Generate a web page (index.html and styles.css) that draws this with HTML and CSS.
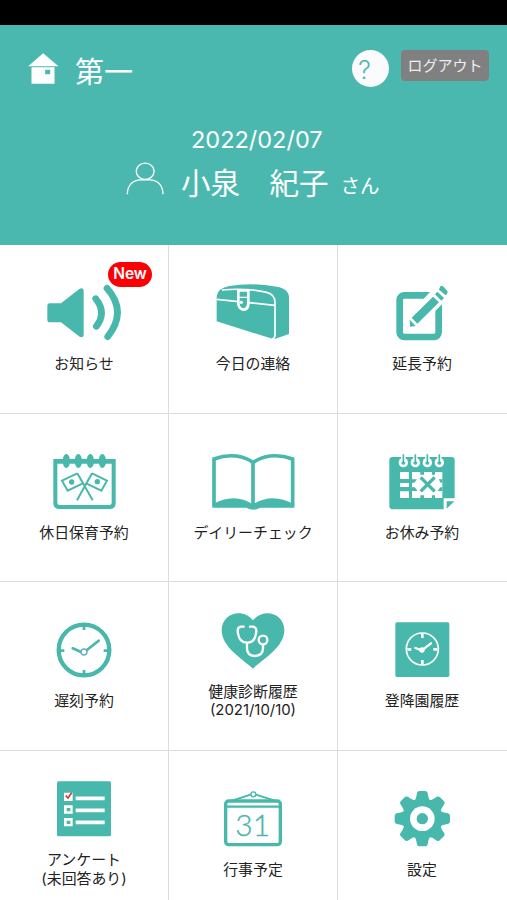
FILE: index.html
```html
<!DOCTYPE html>
<html lang="ja">
<head>
    <meta charset="UTF-8">
    <meta name="viewport" content="width=device-width, initial-scale=1.0">
    <title>メニュー</title>
    <link rel="stylesheet" href="styles.css">
</head>
<body>
    <div class="status-bar"></div>

    <header class="header">
        <div class="top-row">
            <svg class="home-icon" viewBox="86 98 92 93">
                <path fill="#fff" d="M131 99 L177 138 H86 Z"/>
                <path fill="#fff" fill-rule="evenodd" d="M96 141 H165 V190 H96 Z M137 148 V162 H152 V148 Z"/>
            </svg>
            <span class="school">第一</span>
            <button class="help-btn">?</button>
            <button class="logout-btn">ログアウト</button>
        </div>
        <div class="date">2022/02/07</div>
        <div class="user-row">
            <svg class="user-icon" viewBox="379 424 115 98">
                <ellipse cx="437" cy="451" rx="27" ry="24.500"/>
                <path d="M383 521 C383 493 400 477 424 477 H450 C474 477 491 493 491 521"/>
            </svg>
            <span class="user-name">小泉　紀子</span>
            <span class="user-suffix">さん</span>
        </div>
    </header>

    <main class="menu">
        <!-- お知らせ -->
        <a class="item">
            <span class="badge">New</span>
            <svg class="icon" viewBox="118 107 270 180">
                <path class="fill" d="M151 171 H184 L240 127 Q252 122 252 135 V264 Q252 276 240 271 L184 228 H151 Q143 228 143 220 V179 Q143 171 151 171 Z"/>
                <path class="line" stroke-width="20" stroke-linecap="round" d="M288 157 Q322 199 290 240 M322 126 Q384 196 324 271"/>
            </svg>
            <span class="label">お知らせ</span>
        </a>

        <!-- 今日の連絡 -->
        <a class="item">
            <svg class="icon" viewBox="118 107 270 180">
                <path class="fill" d="M144 225 V151 Q147 125 182 119 Q250 108 324 121 Q361 127 361 154 V263 L316 279 Z"/>
                <path class="cut" stroke-width="5" d="M160 131 Q230 124 294 138 Q319 144 319 169 V267 Q319 277 309 278"/>
                <path class="cut" stroke-width="5" d="M144 159 L319 177"/>
                <path class="cut-fill" d="M205 128 H243 V176 Q240 194 224 194 Q208 192 205 174 Z"/>
                <path class="fill" d="M213 136 H235 V151 H213 Z M213 155 H235 V173 Q232 186 224 186 Q215 184 213 173 Z"/>
                <circle class="cut-fill" cx="218" cy="168" r="5"/>
            </svg>
            <span class="label">今日の連絡</span>
        </a>

        <!-- 延長予約 -->
        <a class="item">
            <svg class="icon" viewBox="118 107 270 180">
                <rect class="line" x="186" y="147" width="117" height="125" rx="14" stroke-width="20"/>
                <path class="cut-fill" d="M205 250 L203 216 L280 134 L310 104 L342 137 L313 174 L239 247 Z"/>
                <path class="fill" d="M286 151 L304 168 L239 232 L222 214 Z M216 220 L234 239 L217 241 Z M292 144 L299 136 L319 155 L311 163 Z M304 130 L308 120 Q312 116 316 120 L329 134 Q332 139 324 147 Z"/>
            </svg>
            <span class="label">延長予約</span>
        </a>

        <!-- 休日保育予約 -->
        <a class="item">
            <svg class="icon" viewBox="118 108 270 180">
                <path class="line" stroke-width="12" d="M167 138 H342 V264 Q342 276 329 276 H180 Q167 276 167 264 Z"/>
                <path class="line" stroke-width="14" d="M167 139 H342"/>
                <g class="fill">
                    <ellipse cx="200" cy="138" rx="11" ry="21"/>
                    <ellipse cx="236" cy="138" rx="11" ry="21"/>
                    <ellipse cx="272" cy="138" rx="11" ry="21"/>
                    <ellipse cx="308" cy="138" rx="11" ry="21"/>
                    <circle cx="216" cy="201" r="8"/>
                    <circle cx="293" cy="200" r="8"/>
                </g>
                <path class="line" stroke-width="6" d="M233 175 L187 197 L204 227 L248 206 M233 175 L279 256 M277 175 L322 197 L305 227 L261 206 M277 175 L232 256"/>
            </svg>
            <span class="label">休日保育予約</span>
        </a>

        <!-- デイリーチェック -->
        <a class="item">
            <svg class="icon" viewBox="118 108 270 180">
                <path class="line" stroke-width="11" d="M136 272 V132 Q197 110 247 138 L253 143 L260 138 Q310 110 372 132 V272 M253 143 V272"/>
                <path class="fill" d="M131 278 V268 Q197 231 253 268 Q310 231 377 268 V278 H275 Q253 290 233 278 Z"/>
            </svg>
            <span class="label">デイリーチェック</span>
        </a>

        <!-- お休み予約 -->
        <a class="item">
            <svg class="icon" viewBox="118 108 270 180">
                <path class="fill" d="M165 126 H342 Q351 126 351 135 V250 H318 V283 H165 Q155 283 155 273 V135 Q155 126 165 126 Z M327 259 H350 L327 281 Z"/>
                <g class="cut-fill">
                    <circle cx="197" cy="143" r="14"/>
                    <circle cx="233" cy="143" r="14"/>
                    <circle cx="269" cy="143" r="14"/>
                    <circle cx="305" cy="143" r="14"/>
                    <path d="M187 171 H214 V192 H187 Z M187 204 H214 V216 H187 Z M187 229 H214 V249 H187 Z M223 171 H314 V249 H223 Z"/>
                </g>
                <g class="fill">
                    <circle cx="197" cy="143" r="6"/>
                    <circle cx="233" cy="143" r="6"/>
                    <circle cx="269" cy="143" r="6"/>
                    <circle cx="305" cy="143" r="6"/>
                    <path d="M223 193 H238 L230 203 H223 Z M223 217 H232 L239 228 H223 Z M314 193 H303 L309 203 H314 Z M314 217 H308 L300 228 H314 Z M248 171 H259 V179 H248 Z M283 171 H292 V179 H283 Z M248 241 H259 V249 H248 Z M283 241 H292 V249 H283 Z"/>
                </g>
                <path class="cut" stroke-width="13" d="M197 118 V140 M233 118 V140 M269 118 V140 M305 118 V140"/>
                <path class="line" stroke-width="5" d="M197 118 V141 M233 118 V141 M269 118 V141 M305 118 V141"/>
                <path class="line" stroke-width="10" d="M249 187 L291 229 M291 187 L249 229"/>
            </svg>
            <span class="label">お休み予約</span>
        </a>

        <!-- 遅刻予約 -->
        <a class="item">
            <svg class="icon" viewBox="118 110 270 180">
                <circle class="line" cx="253" cy="203" r="76" stroke-width="13"/>
                <path class="line" stroke-width="8" d="M253 129 V143 M253 263 V277 M179 205 H194 M312 205 H327"/>
                <path class="line" stroke-width="8" stroke-linecap="round" d="M219 198 L251 212 M297 175 L257 207"/>
                <circle cx="253" cy="209" r="9" fill="#fff" stroke="#67abc6" stroke-width="4"/>
            </svg>
            <span class="label">遅刻予約</span>
        </a>

        <!-- 健康診断履歴 -->
        <a class="item">
            <svg class="icon" viewBox="118 82 270 180">
                <path class="fill" d="M253 258 C221 229 159 193 159 143 C159 90 223 74 253 113 C284 74 347 90 347 143 C347 193 284 229 253 258 Z"/>
                <path class="cut" stroke-width="7" stroke-linecap="round" d="M225 132 H216 Q204 135 208 152 Q212 180 235 180 Q259 180 262 152 Q266 135 253 132 H244 M235 180 V197 Q235 219 258 220 Q283 219 283 197 V186"/>
                <circle class="cut" cx="283" cy="172" r="13" stroke-width="7"/>
            </svg>
            <span class="label">健康診断履歴<br>(2021/10/10)</span>
        </a>

        <!-- 登降園履歴 -->
        <a class="item">
            <svg class="icon" viewBox="118 110 270 180">
                <rect class="fill" x="173" y="120" width="162" height="164" rx="5"/>
                <circle class="cut" cx="254" cy="200" r="48" stroke-width="5"/>
                <path class="cut" stroke-width="8" d="M254 154 V167 M254 233 V246 M209 201 H221 M287 201 H299"/>
                <path class="cut" stroke-width="7" stroke-linecap="round" d="M233 197 L252 204 L280 183"/>
                <circle class="cut-fill" cx="253" cy="203" r="8"/>
            </svg>
            <span class="label">登降園履歴</span>
        </a>

        <!-- アンケート -->
        <a class="item">
            <svg class="icon" viewBox="118 84 270 180">
                <rect class="fill" x="172" y="94" width="162" height="165" rx="5"/>
                <path class="cut-fill" d="M193 128 H219 V153 H193 Z M193 166 H219 V191 H193 Z M193 204 H219 V229 H193 Z"/>
                <path class="cut" stroke-width="11" d="M228 145 H315 M228 181 H315 M228 217 H315"/>
                <path class="fill" d="M201 174 H212 V184 H201 Z M201 212 H212 V222 H201 Z"/>
                <path fill="none" stroke="#d43c3c" stroke-width="5" d="M198 137 L205 144 L216 128"/>
            </svg>
            <span class="label">アンケート<br>(未回答あり)</span>
        </a>

        <!-- 行事予定 -->
        <a class="item">
            <svg class="icon" viewBox="118 112 270 180">
                <rect class="line" x="171" y="151" width="164" height="131" rx="9" stroke-width="10"/>
                <path class="line" stroke-width="7" d="M172 168 H334"/>
                <path class="line" stroke-width="6" d="M190 150 L246 132 M318 150 L262 132"/>
                <circle class="line" cx="254" cy="131" r="7.500" stroke-width="4"/>
                <text class="day" x="252" y="257">31</text>
            </svg>
            <span class="label">行事予定</span>
        </a>

        <!-- 設定 -->
        <a class="item">
            <svg class="icon" viewBox="118 112 270 180">
                <defs>
                    <path id="tooth" d="M229 150 Q235 147 237 132 Q238 121 246 121 H262 Q270 121 271 132 Q273 147 279 150 V180 H229 Z"/>
                </defs>
                <g class="fill">
                    <circle cx="254" cy="204" r="59"/>
                    <use href="#tooth"/>
                    <use href="#tooth" transform="rotate(45 254 204)"/>
                    <use href="#tooth" transform="rotate(90 254 204)"/>
                    <use href="#tooth" transform="rotate(135 254 204)"/>
                    <use href="#tooth" transform="rotate(180 254 204)"/>
                    <use href="#tooth" transform="rotate(225 254 204)"/>
                    <use href="#tooth" transform="rotate(270 254 204)"/>
                    <use href="#tooth" transform="rotate(315 254 204)"/>
                </g>
                <circle class="cut-fill" cx="254" cy="204" r="37"/>
                <circle class="fill" cx="254" cy="204" r="17"/>
            </svg>
            <span class="label">設定</span>
        </a>
    </main>
</body>
</html>
```

FILE: styles.css
```css
body {
    font-family: Inter, 'Noto Sans CJK JP', sans-serif;
    background-color: #fff;
    color: #222;
    margin: 0;
    height: 900px;
    overflow: hidden;
}

button {
    border: none;
    padding: 0;
    font-family: inherit;
    cursor: pointer;
}

.status-bar {
    height: 25px;
    background-color: #000;
}

.header {
    box-sizing: border-box;
    height: 220px;
    padding: 24px 18px 0 28px;
    background-color: #4bb8af;
    color: #fff;
}

.top-row {
    display: flex;
    height: 40px;
}

.home-icon {
    width: 31px;
    height: 31px;
    margin-top: 4px;
}

.school {
    margin: 4px auto 0 16px;
    font-size: 29px;
    line-height: 40px;
}

.help-btn {
    width: 37px;
    height: 37px;
    margin: 1px 12px 0 0;
    padding: 2px 12px 0 0;
    border-radius: 50%;
    background-color: #fbfbfb;
    color: #4bb8af;
    font-size: 25px;
    font-weight: 300;
}

.logout-btn {
    width: 88px;
    height: 31px;
    margin-top: 1px;
    padding-bottom: 2px;
    border-radius: 4px;
    background-color: #808080;
    color: #eee;
    font-size: 15px;
}

.date {
    margin: 36px 0 0 163px;
    font-size: 23.5px;
    line-height: 30px;
}

.user-row {
    display: flex;
    align-items: center;
    height: 40px;
    margin: 8px 0 0 98px;
}

.user-icon {
    width: 38px;
    height: 33px;
    margin-top: -10px;
    fill: none;
    stroke: #fff;
    stroke-width: 4;
}

.user-name {
    margin-left: 17px;
    font-size: 29.5px;
    line-height: 40px;
}

.user-suffix {
    margin: 6px 0 0 12px;
    font-size: 19.5px;
    line-height: 24px;
}

.menu {
    display: grid;
    grid-template-columns: repeat(3, 169px);
    grid-auto-rows: 168.5px;
}

.item {
    position: relative;
    box-sizing: border-box;
    display: flex;
    flex-direction: column;
    align-items: center;
    justify-content: center;
    padding: 0 1px 2px 0;
    border-bottom: 1px solid #dcdcdc;
    box-shadow: inset -1px 0 #dcdcdc;
}

.item:nth-child(3n) {
    box-shadow: none;
}

.icon {
    width: 90px;
    height: 60px;
    margin-bottom: 13px;
}

.fill {
    fill: #47b8ab;
}

.line {
    fill: none;
    stroke: #47b8ab;
}

.cut {
    fill: none;
    stroke: #fff;
}

.cut-fill {
    fill: #fff;
}

.day {
    fill: #47b8ab;
    stroke: #47b8ab;
    stroke-width: 1;
    font-family: Lato, sans-serif;
    font-size: 90px;
    font-weight: 300;
    text-anchor: middle;
}

.label {
    font-size: 14.9px;
    line-height: 18.5px;
    text-align: center;
    white-space: nowrap;
}

.badge {
    position: absolute;
    top: 17px;
    left: 108px;
    width: 44px;
    height: 25px;
    border-radius: 13px;
    background-color: #fc0006;
    color: #fff;
    font-size: 15.5px;
    font-weight: 600;
    line-height: 24px;
    text-align: center;
}
```
